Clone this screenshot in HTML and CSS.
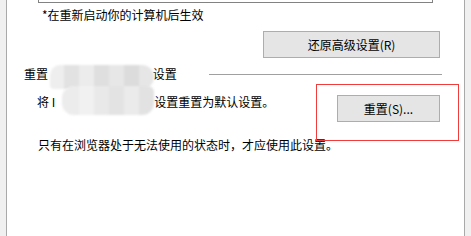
FILE: index.html
```
<!DOCTYPE html>
<html>
<head>
    <meta charset="utf-8">
    <title>Internet 选项 - 高级</title>
    <link rel="stylesheet" href="styles.css">
</head>
<body>
    <div class="panel">
        <div class="list-tail"></div>

        <div class="note">*在重新启动你的计算机后生效</div>

        <div class="button-row">
            <button class="button restore-btn">还原高级设置(R)</button>
        </div>

        <div class="group-header">
            <span class="group-title">重置 <span class="redact redact-title">Internet Explorer</span>设置</span>
            <span class="group-line"></span>
        </div>

        <div class="reset-row">
            <div class="reset-text">将 I<span class="redact redact-body">nternet Explorer</span>设置重置为默认设置。</div>
            <button class="button reset-btn">重置(S)...</button>
        </div>

        <div class="warning">只有在浏览器处于无法使用的状态时，才应使用此设置。</div>

        <!-- mosaic over the product name -->
        <div class="blur-top"></div>
        <div class="blur-bottom"></div>

        <!-- highlight box -->
        <div class="highlight"></div>
    </div>
</body>
</html>
```

FILE: styles.css
```
body {
    margin: 0;
    background: #f0f0f0;
    font-family: "Noto Sans CJK SC", "Microsoft YaHei", sans-serif;
    font-size: 12px;
    color: #000;
}

.panel {
    position: relative;
    margin: 0 6px;
    height: 236px;
    background: #fff;
    border-left: 1px solid #a9a9a9;
    border-right: 1px solid #a9a9a9;
    overflow: hidden;
}

.list-tail {
    margin-left: 31px;
    width: 393px;
    height: 2px;
    border: 1px solid #828282;
    border-top: none;
}

.note {
    margin-top: 4px;
    padding-left: 35px;
    line-height: 16px;
}

.button-row {
    display: flex;
    justify-content: flex-end;
    padding-right: 24px;
    margin-top: 8px;
}

.button {
    font-family: inherit;
    font-size: 12px;
    color: #000;
    background: #e5e5e5;
    border: 1px solid #adadad;
    padding: 0;
    margin: 0;
    line-height: 16px;
}

.restore-btn {
    width: 177px;
    height: 27px;
}

.group-header {
    display: flex;
    align-items: center;
    margin-top: 8px;
    padding-left: 17px;
    padding-right: 22px;
    line-height: 16px;
}

.group-title {
    white-space: nowrap;
}

.redact {
    display: inline-block;
    overflow: hidden;
    white-space: nowrap;
    vertical-align: top;
    color: transparent;
}

.redact-title {
    width: 102px;
}

.redact-body {
    width: 99px;
}

.group-line {
    flex: 1;
    margin-left: 32px;
    border-top: 1px solid #a0a0a0;
}

.reset-row {
    display: flex;
    justify-content: space-between;
    align-items: flex-start;
    margin-top: 12px;
    padding-left: 30px;
    padding-right: 24px;
}

.reset-text {
    line-height: 16px;
    white-space: nowrap;
}

.reset-btn {
    width: 103px;
    height: 27px;
    margin-top: 1px;
}

.warning {
    margin-top: 15px;
    padding-left: 31px;
    line-height: 16px;
}

.blur-top,
.blur-bottom {
    position: absolute;
    background: linear-gradient(90deg,
        #eeeeee 0 14px, #e2e2e2 14px 29px, #ececec 29px 44px,
        #dfdfdf 44px 59px, #e7e7e7 59px 74px, #dcdcdc 74px 89px,
        #e6e6e6 89px);
    filter: blur(1px);
}

.blur-top {
    left: 43px;
    top: 65px;
    width: 104px;
    height: 24px;
    border-radius: 10px 12px 12px 4px;
}

.blur-bottom {
    left: 55px;
    top: 86px;
    width: 92px;
    height: 29px;
    border-radius: 12px 6px 12px 12px;
    background: linear-gradient(90deg,
        #ececec 0 17px, #f1f1f1 17px 32px, #e9e9e9 32px 47px,
        #e3e3e3 47px 62px, #ebebeb 62px 77px, #e2e2e2 77px);
}

.highlight {
    position: absolute;
    left: 309px;
    top: 84px;
    width: 141px;
    height: 55px;
    border: 1px solid #f23c3c;
}
```
